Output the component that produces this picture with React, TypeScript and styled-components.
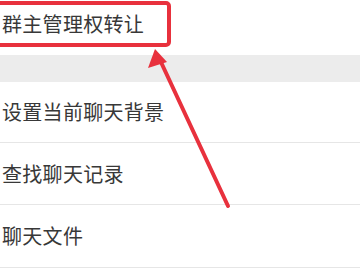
import React from "react";
import styled, { createGlobalStyle } from "styled-components";

const Global = createGlobalStyle`
  html, body { margin: 0; padding: 0; background: #ffffff; }
  body { font-family: "Noto Sans CJK SC", "Noto Sans", sans-serif; }
`;

const Page = styled.div`
  position: relative;
  width: 360px;
  height: 270px;
  overflow: hidden;
  background: #ffffff;
  display: flex;
  flex-direction: column;
`;

const Row = styled.div<{ $h: number; $pb?: number; $line?: boolean }>`
  height: ${(p) => p.$h}px;
  box-sizing: border-box;
  flex: none;
  display: flex;
  align-items: center;
  padding: 0 0 ${(p) => p.$pb ?? 0}px 2px;
  border-bottom: ${(p) => (p.$line ? "1px solid #e6e6e6" : "none")};
`;

const Label = styled.span`
  font-size: 20px;
  line-height: 1;
  color: #383838;
  letter-spacing: 0.3px;
`;

const Band = styled.div`
  height: 27px;
  flex: none;
  background: #ececec;
`;

const Highlight = styled.div`
  position: absolute;
  left: -10px;
  top: 1px;
  width: 173px;
  height: 38px;
  border: 4px solid #e8313d;
  border-radius: 5px;
`;

const Arrow = styled.svg`
  position: absolute;
  left: 0;
  top: 0;
  pointer-events: none;
`;

export default function App() {
  return (
    <>
      <Global />
      <Page>
        <Row $h={55} $pb={7}>
          <Label>群主管理权转让</Label>
        </Row>
        <Band />
        <Row $h={61} $line>
          <Label>设置当前聊天背景</Label>
        </Row>
        <Row $h={62} $line>
          <Label>查找聊天记录</Label>
        </Row>
        <Row $h={63} $line>
          <Label>聊天文件</Label>
        </Row>
        <Highlight />
        <Arrow width="360" height="270" viewBox="0 0 360 270">
          <line x1="228" y1="206" x2="160" y2="60" stroke="#e8313d" strokeWidth="4" strokeLinecap="round" />
          <polygon points="155,49 148,68 167,62" fill="#e8313d" />
        </Arrow>
      </Page>
    </>
  );
}
